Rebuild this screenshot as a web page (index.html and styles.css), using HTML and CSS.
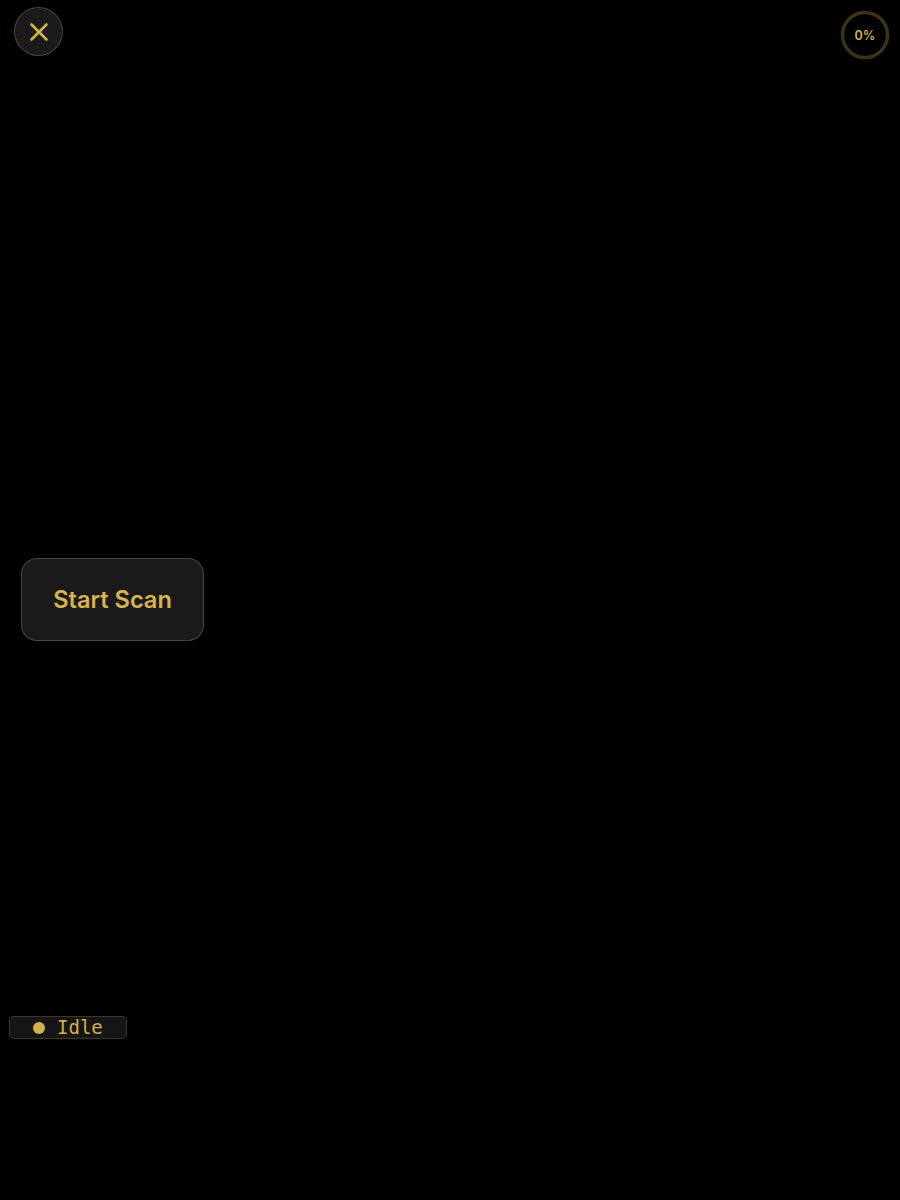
FILE: index.html
```html
<!DOCTYPE html>
<html>
<head>
<meta charset="utf-8">
<link rel="stylesheet" href="styles.css">
</head>
<body>
<div class="screen">
  <header class="topbar">
    <button class="close-btn" aria-label="Close">
      <svg width="20" height="20" viewBox="0 0 20 20"><path d="M2.5 2.5 L17.5 17.5 M17.5 2.5 L2.5 17.5" stroke="#d4b04a" stroke-width="2.6" stroke-linecap="round" fill="none"/></svg>
    </button>
    <div class="progress-ring">
      <svg class="ring-svg" width="50" height="50" viewBox="0 0 50 50"><circle cx="25" cy="25" r="22.5" stroke="#3a3219" stroke-width="3.5" fill="none"/></svg>
      <span class="ring-text">0%</span>
    </div>
  </header>
  <main class="main">
    <button class="scan-btn">Start Scan</button>
  </main>
  <div class="status">
    <span class="status-dot"></span>
    <span class="status-text">Idle</span>
  </div>
</div>
</body>
</html>
```
FILE: styles.css
```css
html, body {
  margin: 0;
  padding: 0;
  background: #000;
}
.screen {
  width: 900px;
  height: 1200px;
  font-family: Inter, "Noto Sans", sans-serif;
}
.topbar {
  display: flex;
  justify-content: space-between;
  align-items: flex-start;
  height: 60px;
}
.close-btn {
  margin: 7px 0 0 14px;
  width: 49px;
  height: 49px;
  border-radius: 50%;
  background: #1b1b1b;
  border: 1px solid rgba(212, 176, 74, 0.28);
  display: flex;
  align-items: center;
  justify-content: center;
  padding: 0;
}
.progress-ring {
  margin: 10px 10px 0 0;
  width: 50px;
  height: 50px;
  display: flex;
  align-items: center;
  justify-content: center;
  position: relative;
}
.ring-svg {
  position: absolute;
  left: 0;
  top: 0;
}
.ring-text {
  position: relative;
  color: #d4b04a;
  font-size: 12.5px;
  font-weight: 600;
}
.main {
  padding-left: 21px;
  margin-top: 498px;
}
.scan-btn {
  width: 183px;
  height: 83px;
  border-radius: 16px;
  background: #1a1a1a;
  border: 1px solid rgba(212, 176, 74, 0.3);
  color: #d9b44e;
  font-family: Inter, "Noto Sans", sans-serif;
  font-size: 23.6px;
  font-weight: 600;
  padding: 0;
}
.status {
  margin: 375px 0 0 9px;
  width: 118px;
  height: 23px;
  box-sizing: border-box;
  background: #161616;
  border: 1px solid rgba(212, 176, 74, 0.22);
  border-radius: 5px;
  display: flex;
  align-items: center;
  padding-left: 23px;
  gap: 12px;
}
.status-dot {
  width: 12px;
  height: 12px;
  border-radius: 50%;
  background: #d4b04a;
}
.status-text {
  font-family: "DejaVu Sans Mono", "Liberation Mono", monospace;
  font-size: 19px;
  color: #d4b04a;
  line-height: 1;
}
```
